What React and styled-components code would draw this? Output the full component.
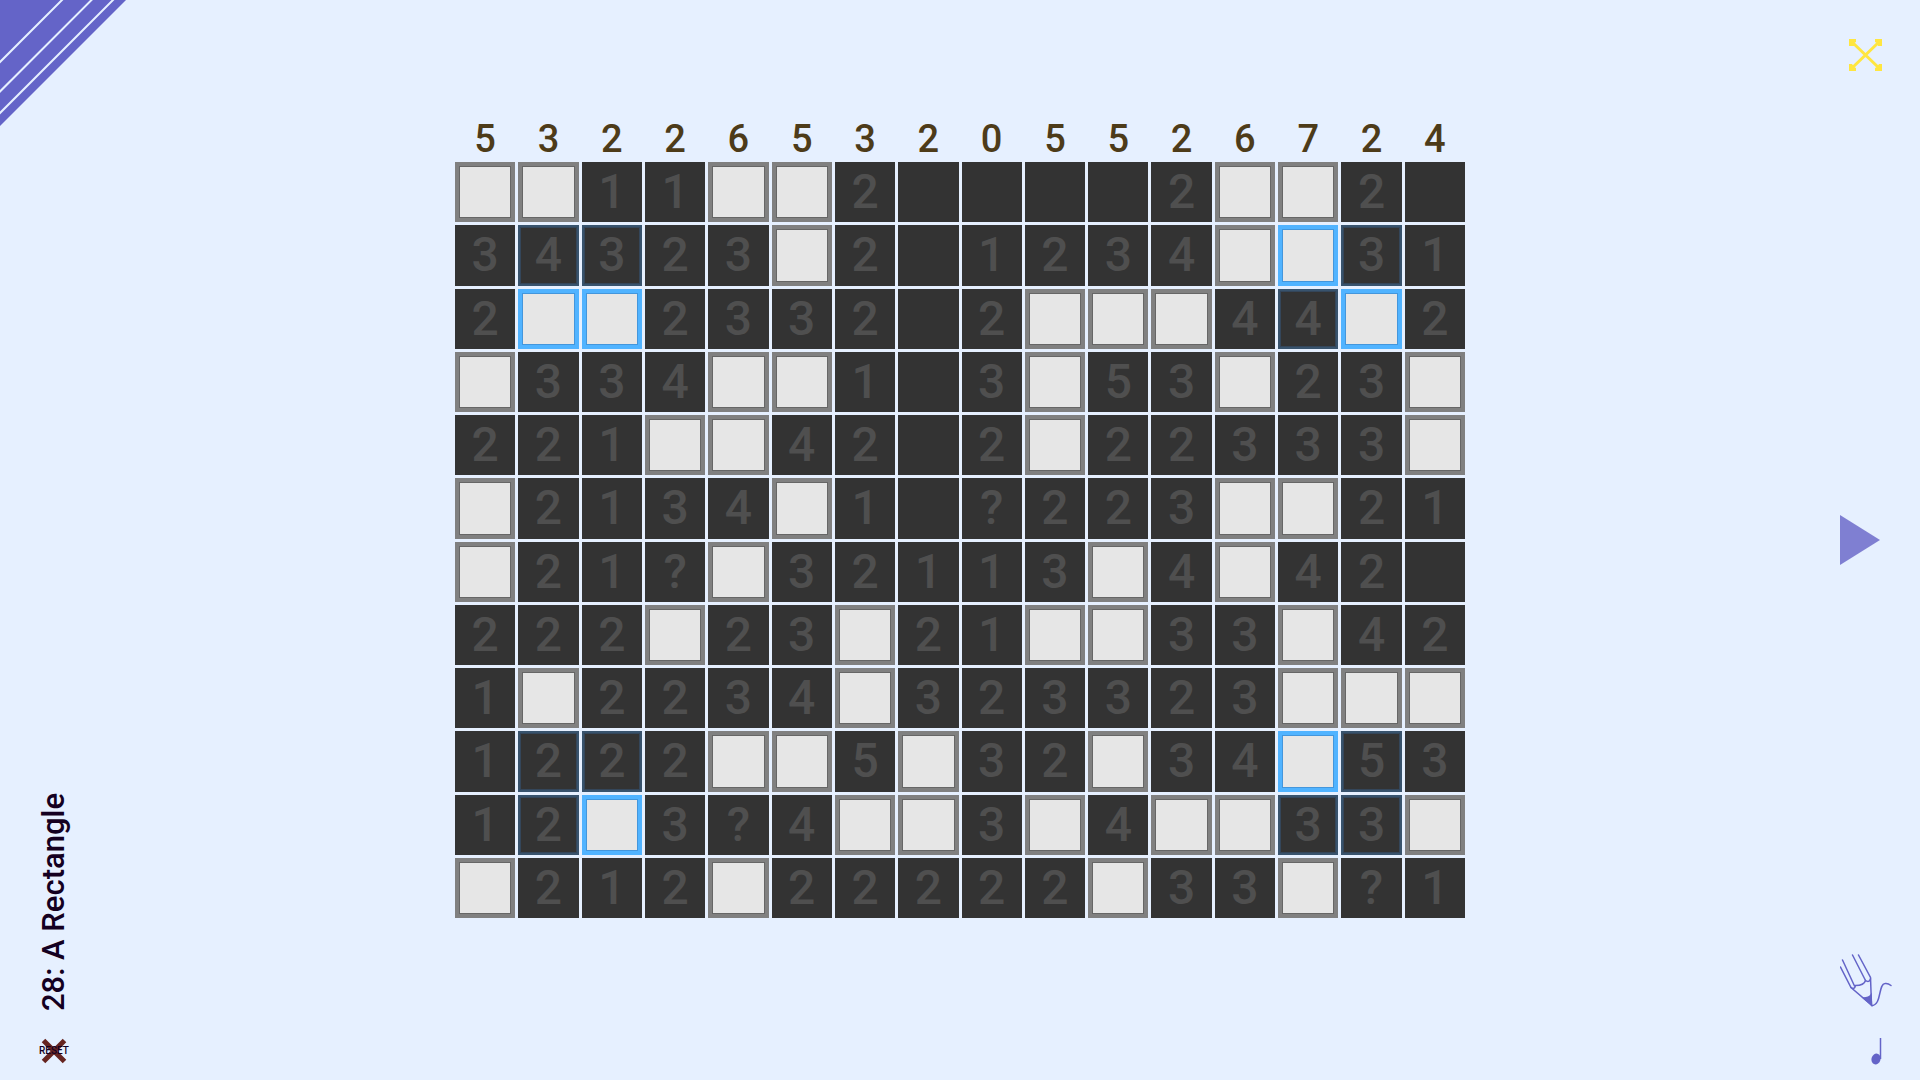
import React, { useState } from "react";
import styled, { createGlobalStyle, css } from "styled-components";

const GlobalStyle = createGlobalStyle`
  *, *::before, *::after { box-sizing: border-box; }
  body { margin: 0; background: #e6f0ff; }
  button { margin: 0; padding: 0; border: 0; background: none; font: inherit; color: inherit; cursor: pointer; }
  svg { display: block; }
`;

const clues = [5, 3, 2, 2, 6, 5, 3, 2, 0, 5, 5, 2, 6, 7, 2, 4];

/* "#" covered, "@" covered and lit, "." open and empty */
const rows = [
  "##11##2....2##2.",
  "34323#2.1234#@31",
  "2@@2332.2###44@2",
  "#334##1.3#53#23#",
  "221##42.2#22333#",
  "#2134#1.?223##21",
  "#21?#32113#4#42.",
  "222#23#21##33#42",
  "1#2234#323323###",
  "1222##5#32#34@53",
  "12@3?4##3#4##33#",
  "#212#22222#33#?1",
];

/* open squares that share the lit outline, as "row,column" */
const lit = new Set(["1,1", "1,2", "1,14", "2,13", "9,1", "9,2", "9,14", "10,1", "10,13", "10,14"]);

const Page = styled.div`
  display: grid;
  grid-template-columns: 120px 1fr 120px;
  height: 100vh;
  overflow: hidden;
  background: #e6f0ff;
  color: #140021;
  font-family: Roboto, "Liberation Sans", sans-serif;
`;

const LeftRail = styled.aside`
  display: flex;
  flex-direction: column;
  justify-content: space-between;
  align-items: flex-start;
`;

const Corner = styled.svg`
  width: 128px;
  height: 128px;
`;

const TitleBlock = styled.div`
  display: flex;
  flex-direction: column;
  align-items: center;
  gap: 26px;
  width: 108px;
  padding-bottom: 15px;
`;

const Title = styled.h1`
  margin: 0;
  writing-mode: vertical-rl;
  transform: rotate(180deg);
  font-size: 31px;
  line-height: 40px;
  font-weight: 500;
  white-space: nowrap;
`;

const ResetButton = styled.button`
  display: grid;
  place-items: center;
  width: 36px;
  height: 28px;

  > * { grid-area: 1 / 1; }
`;

const ResetLabel = styled.span`
  position: relative;
  font-size: 10px;
  line-height: 12px;
  font-weight: 500;
`;

const Stage = styled.main`
  display: grid;
  grid-template-rows: 1fr auto 1fr;
  justify-content: center;
  justify-items: center;
`;

const ClueRow = styled.div`
  display: grid;
  grid-template-columns: repeat(16, 1fr);
  gap: 3px;
  align-self: end;
  width: 100%;
  padding-bottom: 3px;
  color: #4d3b19;
  font-size: 38px;
  line-height: 40px;
  font-weight: 500;
  text-align: center;
`;

const Board = styled.div`
  display: grid;
  grid-template-columns: repeat(16, 1fr);
  grid-template-rows: repeat(12, 1fr);
  gap: 3px;
  height: 70vh;
  aspect-ratio: 1010 / 756;
`;

const OpenCell = styled.div`
  display: flex;
  align-items: center;
  justify-content: center;
  min-width: 0;
  min-height: 0;
  background: #333;
  color: #4f4f4f;
  font-size: 48px;
  line-height: 56px;
  font-weight: 500;
  ${(p) => p.$lit && css`box-shadow: inset 0 0 0 2px #38536d, inset 0 0 0 3px #34465a;`}
`;

const CoveredCell = styled.button`
  && {
    min-width: 0;
    min-height: 0;
    border: 4px solid ${(p) => (p.$lit ? "#50b3ff" : "#808080")};
    background: #e6e6e6;
    box-shadow: inset 0 0 0 1px ${(p) => (p.$lit ? "#4396dc" : "#666")};
  }
`;

const RightRail = styled.aside`
  display: grid;
  grid-template-rows: 1fr auto 1fr;
  justify-items: start;
  padding: 15px 0 15px 40px;
`;

const IconButton = styled.button`
  display: block;
  align-self: start;
`;

const Top = styled.div`
  padding-top: 23px;
`;

const Tools = styled.div`
  display: flex;
  flex-direction: column;
  align-self: end;
  gap: 30px;
`;

function Square({ value, row, column }) {
  const [marked, setMarked] = useState(value === "@");
  if (value === "#" || value === "@") {
    return (
      <CoveredCell
        type="button"
        $lit={marked}
        aria-label={`Row ${row + 1}, column ${column + 1}`}
        onClick={() => setMarked(!marked)}
      />
    );
  }
  return <OpenCell $lit={lit.has(`${row},${column}`)}>{value === "." ? "" : value}</OpenCell>;
}

export default function App() {
  return (
    <>
      <GlobalStyle />
      <Page>
        <LeftRail>
          <Corner viewBox="0 0 128 128" aria-hidden="true">
            <path d="M0 0H126L0 126Z" fill="#6464c8" />
            <path d="M-2 64L64 -2M-2 93.500L93.500 -2M-2 115L115 -2" stroke="#e6f0ff" strokeWidth="2" />
          </Corner>
          <TitleBlock>
            <Title>28: A Rectangle</Title>
            <ResetButton type="button">
              <svg width="26" height="26" viewBox="0 0 26 26" aria-hidden="true">
                <path d="M2.500 2.500L23.500 23.500M23.500 2.500L2.500 23.500" stroke="#662420" strokeWidth="5" />
              </svg>
              <ResetLabel>RESET</ResetLabel>
            </ResetButton>
          </TitleBlock>
        </LeftRail>

        <Stage>
          <ClueRow>
            {clues.map((n, i) => (
              <span key={i}>{n}</span>
            ))}
          </ClueRow>
          <Board>
            {rows.map((line, r) =>
              [...line].map((value, c) => <Square key={`${r},${c}`} value={value} row={r} column={c} />)
            )}
          </Board>
        </Stage>

        <RightRail>
          <Top>
            <IconButton type="button" aria-label="Full screen">
              <svg width="46" height="34" viewBox="-9 0 46 34" aria-hidden="true">
                <g fill="#ffe640">
                  <path d="M0 1H7V4L5 5L7 8L4 8H0Z M33 1H26V4L28 5L29 8H33Z M0 33H7V30L5 29L3 26H0Z M33 33H26V30L28 29L30 26H33Z" />
                </g>
                <path d="M3 4L30 30M30 4L3 30" stroke="#ffe640" strokeWidth="3" />
              </svg>
            </IconButton>
          </Top>
          <IconButton type="button" aria-label="Next puzzle">
            <svg width="40" height="50" viewBox="0 0 40 50" aria-hidden="true">
              <path d="M0 0L40 25L0 50Z" fill="#7f7fd2" />
            </svg>
          </IconButton>
          <Tools>
            <IconButton type="button" aria-label="Draw">
              <svg width="54" height="54" viewBox="1 0 54 54" fill="none" stroke="#6464c8" strokeWidth="1.500" strokeLinecap="round" aria-hidden="true">
                <path d="M1.500 14L12 34.500L32.500 52L31.500 24.500L19.500 2M3.500 7L15.500 33M13.500 2L26.500 27.500" />
                <path d="M12 34.500Q15.500 37 16.500 32.500Q25 32.500 26.500 27.500Q30 30 31.500 26" />
                <path d="M24.500 45Q30 45 32 42L32.500 52Z" fill="#6464c8" />
                <path d="M32.500 52.500C43 52.500 39 31 46 30.500Q49 30 52 32.500" />
              </svg>
            </IconButton>
            <IconButton type="button" aria-label="Music">
              <svg width="54" height="28" viewBox="-31 0 54 28" aria-hidden="true">
                <ellipse cx="5" cy="22" rx="4.500" ry="5.500" transform="rotate(15 5 22)" fill="#6464c8" />
                <path d="M9.500 1V22" stroke="#6464c8" strokeWidth="1.500" />
              </svg>
            </IconButton>
          </Tools>
        </RightRail>
      </Page>
    </>
  );
}
